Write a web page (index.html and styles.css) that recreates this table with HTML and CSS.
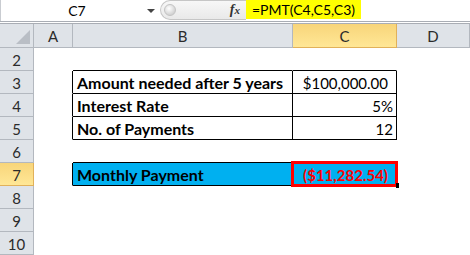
FILE: index.html
```html
<!DOCTYPE html>
<html>
<head>
<meta charset="utf-8">
<link rel="stylesheet" href="styles.css">
</head>
<body>
<div class="app">
  <div class="fbar">
    <div class="namebox"><span class="name">C7</span><span class="dd"></span></div>
    <div class="splitter">
      <span class="knob"></span>
      <span class="fx">f<span class="x">x</span></span>
    </div>
    <div class="formula"><span class="ftext">=PMT(C4,C5,C3)</span></div>
  </div>
  <div class="sep"></div>
  <div class="grid">
    <div class="hd corner"><span class="tri"></span></div>
    <div class="hd col">A</div>
    <div class="hd col">B</div>
    <div class="hd col sel">C</div>
    <div class="hd col">D</div>

    <div class="hd row">2</div>
    <div class="c"></div><div class="c bb"></div><div class="c bb"></div><div class="c"></div>

    <div class="hd row">3</div>
    <div class="c br"></div><div class="c bb br lbl">Amount needed after 5 years</div><div class="c bb br num cur">$100,000.00</div><div class="c"></div>

    <div class="hd row">4</div>
    <div class="c br"></div><div class="c bb br lbl">Interest Rate</div><div class="c bb br num">5%</div><div class="c"></div>

    <div class="hd row">5</div>
    <div class="c br"></div><div class="c bb br lbl">No. of Payments</div><div class="c bb br num">12</div><div class="c"></div>

    <div class="hd row">6</div>
    <div class="c"></div><div class="c bb"></div><div class="c"></div><div class="c"></div>

    <div class="hd row sel">7</div>
    <div class="c br"></div><div class="c bb blue lbl">Monthly Payment</div><div class="c blue num cur result"><span class="val">($11,282.54)</span><span class="redbox"></span><span class="handle"></span></div><div class="c"></div>

    <div class="hd row">8</div>
    <div class="c"></div><div class="c"></div><div class="c"></div><div class="c"></div>

    <div class="hd row">9</div>
    <div class="c"></div><div class="c"></div><div class="c"></div><div class="c"></div>

    <div class="hd row">10</div>
    <div class="c"></div><div class="c"></div><div class="c"></div><div class="c"></div>
  </div>
</div>
</body>
</html>
```
FILE: styles.css
```css
* { box-sizing: border-box; }
html, body { margin: 0; padding: 0; background: #fff; }
body { font-family: "Lato", "Liberation Sans", sans-serif; color: #000; }
.app { width: 470px; height: 255px; overflow: hidden; }

.fbar { display: flex; height: 21px; background: #fff; border-left: 1px solid #c9ccd1; }
.namebox { width: 159px; display: flex; align-items: center; position: relative; }
.name { flex: 1; text-align: center; font-size: 14px; padding-left: 6px; color: #000; }
.dd { width: 0; height: 0; border-left: 4px solid transparent; border-right: 4px solid transparent; border-top: 4px solid #444; margin-right: 5px; }
.splitter { width: 86px; height: 20px; display: flex; align-items: center; justify-content: space-between;
  background: linear-gradient(#f7f7f7, #e9e9e9); border: 1px solid #c6c6c6; border-right: none;
  border-radius: 10px 0 0 10px; padding: 0 6px 0 3px; }
.knob { width: 12px; height: 12px; border-radius: 50%; background: radial-gradient(circle at 40% 35%, #fff, #d3d3d3 70%); border: 1px solid #c3c3c3; }
.fx { font-family: "Liberation Serif", serif; font-style: italic; font-weight: bold; font-size: 14px; color: #333; }
.fx .x { font-size: 11px; }
.formula { flex: 1; display: flex; align-items: stretch; }
.ftext { background: #ffff00; font-size: 14px; padding: 1px 6px 0 6px; line-height: 18px; height: 19px; color: #000; }

.sep { height: 3px; border-top: 1px solid #a9adb4; border-bottom: 1px solid #a9adb4; background: #fff; }

.grid { display: grid; grid-template-columns: 34px 39px 220px 104px 73px; grid-template-rows: 24px repeat(9, 23px); }
.hd { background: #dfe3e8; border-right: 1px solid #b3b8bf; border-bottom: 1px solid #b3b8bf; color: #2b2b2b;
  font-size: 15px; display: flex; align-items: center; justify-content: center; }
.hd.col { padding-top: 1px; }
.hd.row { padding-top: 1px; }
.hd.sel { background: linear-gradient(#f8d57a, #ffe796); border-color: #e1b15a; }
.corner { position: relative; }
.tri { position: absolute; right: 3px; bottom: 3px; width: 0; height: 0; border-left: 14px solid transparent; border-bottom: 14px solid #b9bec5; }

.c { border-right: 1px solid transparent; border-bottom: 1px solid transparent; font-size: 15px; display: flex; align-items: center; white-space: nowrap; position: relative; }
.c.bb { border-bottom-color: #000; }
.c.br { border-right-color: #000; }
.lbl { font-weight: bold; font-size: 16px; padding-left: 4px; padding-top: 1px; }
.num { justify-content: flex-end; padding-right: 3px; padding-top: 1px; }
.num.cur { padding-right: 8px; }
.blue { background: #00b0f0; }
.result { border-bottom-color: #000; padding-right: 4px; }
.val { color: #ff0000; font-weight: bold; }
.redbox { position: absolute; left: -2px; top: -2px; right: -2px; bottom: -2px; border: 3px solid #ff0000; }
.handle { position: absolute; right: -3px; bottom: -3px; width: 3px; height: 5px; background: #000; }
```
